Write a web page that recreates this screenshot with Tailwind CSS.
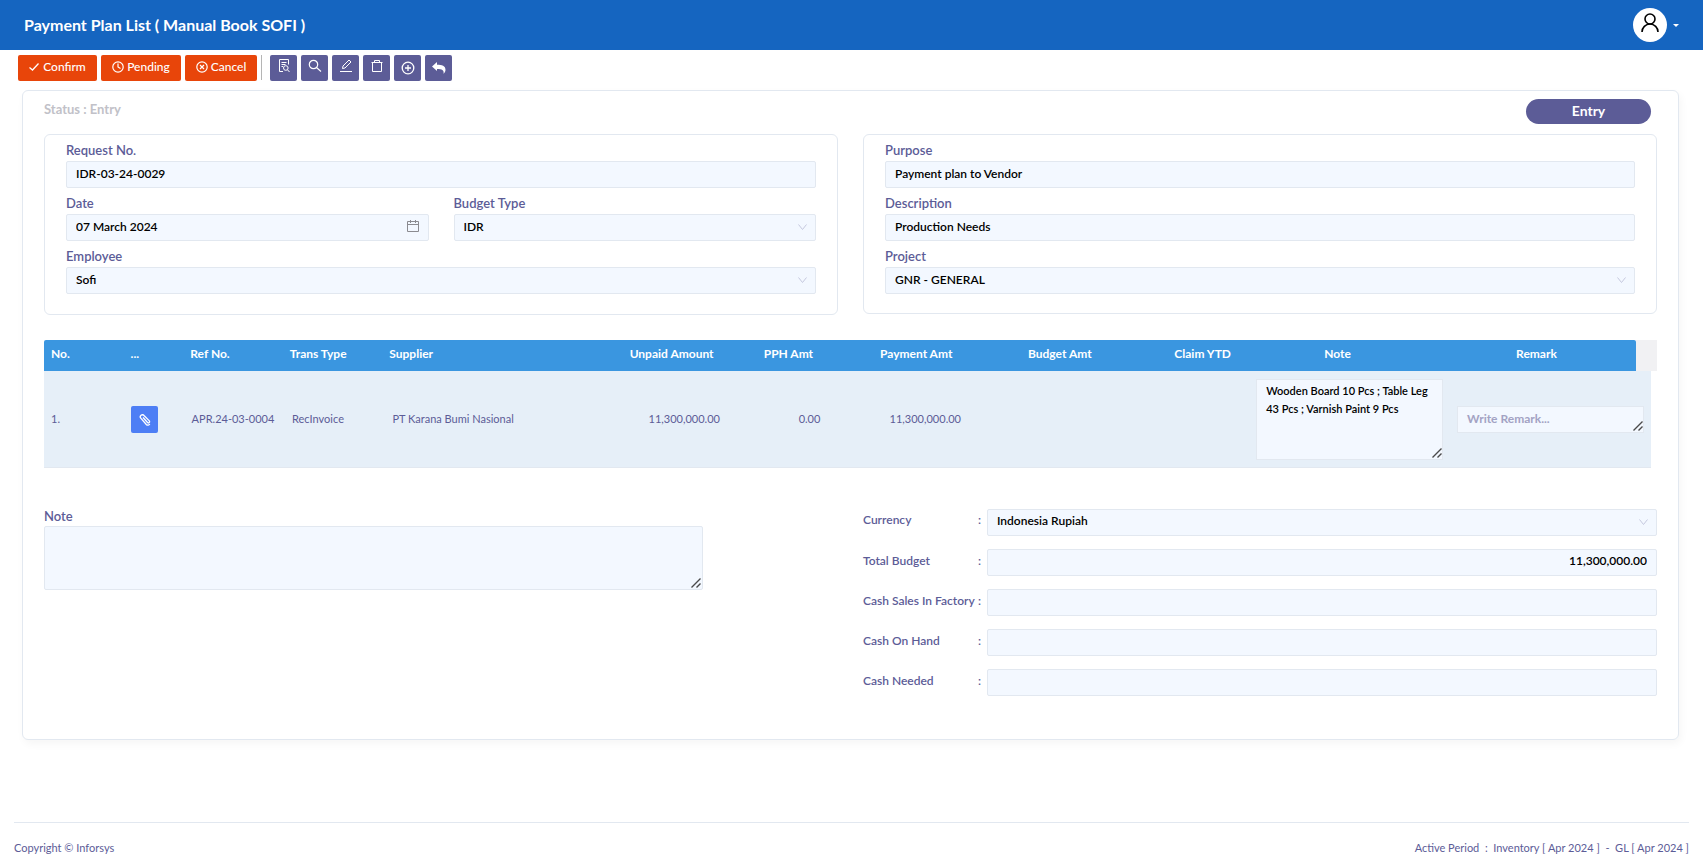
<!DOCTYPE html>
<html lang="en">
<head>
    <meta charset="UTF-8">
    <meta name="viewport" content="width=device-width, initial-scale=1.0">
    <script src="https://cdn.jsdelivr.net/npm/@tailwindcss/browser@4"></script>
    <title>Payment Plan List</title>
</head>
<body class="min-h-screen flex flex-col bg-white font-['Lato','Noto_Sans',sans-serif] text-xs text-[#5c5c97]">
    <header class="flex items-center justify-between h-[50px] px-6 bg-[#1565c0]">
        <h1 class="text-base font-bold text-white">Payment Plan List ( Manual Book SOFI )</h1>
        <button class="flex items-center gap-1.5" aria-label="Account">
            <span class="flex items-center justify-center size-[34px] rounded-full bg-white">
                <svg class="size-6 mb-1" viewBox="0 0 24 24" fill="none" stroke="#000" stroke-width="1.6"><circle cx="12" cy="8" r="5"/><path d="M4 21a8 8 0 0 1 16 0"/></svg>
            </span>
            <svg class="w-1.5 h-[3px]" viewBox="0 0 6 3" fill="#fff"><path d="M0 0h6L3 3z"/></svg>
        </button>
    </header>

    <!--toolbar-->
    <div class="flex gap-1 pt-[5px] pl-[18px] text-white">
        <button class="flex items-center justify-center gap-1 w-[79px] h-[26px] pb-0.5 rounded-xs bg-[#e8450a] font-medium">
            <svg class="size-2.5" viewBox="0 0 10 10" fill="none" stroke="currentColor" stroke-width="1.3"><path d="M.5 5.5l3 2.500L9.500 1.500"/></svg>Confirm</button>
        <button class="flex items-center justify-center gap-[3px] w-20 h-[26px] pb-0.5 rounded-xs bg-[#e8450a] font-medium">
            <svg class="size-3" viewBox="0 0 12 12" fill="none" stroke="currentColor" stroke-width="1.2"><circle cx="6" cy="6" r="5.200"/><path d="M6 2.500V6l2.500 1.500"/></svg>Pending</button>
        <button class="flex items-center justify-center gap-[3px] w-[72px] h-[26px] pb-0.5 rounded-xs bg-[#e8450a] font-medium">
            <svg class="size-3" viewBox="0 0 12 12" fill="none" stroke="currentColor" stroke-width="1.2"><circle cx="6" cy="6" r="5.200"/><path d="M4 4l4 4M8 4L4 8"/></svg>Cancel</button>
        <span class="w-px h-[25px] mr-1 bg-[#b5b5b5]"></span>
        <button class="flex items-center justify-center w-[27px] h-[26px] rounded-xs bg-[#5c5c97]" aria-label="Preview">
            <svg class="size-3.5 mb-1" viewBox="0 0 14 14" fill="none" stroke="currentColor"><path d="M6 12.500H2.500v-12h9v5M4.500 3.500h5M4.500 5.500h4M4.500 7.500h1.500"/><circle cx="8.800" cy="9" r="2.300"/><path d="M10.500 10.800l2 2.200"/></svg></button>
        <button class="flex items-center justify-center w-[27px] h-[26px] rounded-xs bg-[#5c5c97]" aria-label="Search">
            <svg class="size-3.5 mb-1" viewBox="0 0 14 14" fill="none" stroke="currentColor" stroke-width="1.2"><circle cx="5.500" cy="5.500" r="4.200"/><path d="M8.500 8.500l4.500 4"/></svg></button>
        <button class="flex items-center justify-center w-[27px] h-[26px] rounded-xs bg-[#5c5c97]" aria-label="Edit">
            <svg class="size-3.5 mb-1" viewBox="0 0 14 14" fill="none" stroke="currentColor"><path d="M3.500 9.500l.5-2.500 6-6L12 3 6 9zM1 12.500h12"/></svg></button>
        <button class="flex items-center justify-center w-[27px] h-[26px] rounded-xs bg-[#5c5c97]" aria-label="Delete">
            <svg class="size-3.5 mb-1" viewBox="0 0 14 14" fill="none" stroke="currentColor"><path d="M1.500 3.500h11M4.500 3.500v-2h5v2M2.500 3.500v9h9v-9"/></svg></button>
        <button class="flex items-center justify-center w-[27px] h-[26px] rounded-xs bg-[#5c5c97]" aria-label="Add">
            <svg class="size-3.5" viewBox="0 0 14 14" fill="none" stroke="currentColor" stroke-width="1.3"><circle cx="7" cy="7" r="5.800"/><path d="M7 4v6M4 7h6"/></svg></button>
        <button class="flex items-center justify-center w-[27px] h-[26px] rounded-xs bg-[#5c5c97]" aria-label="Back">
            <svg class="size-3.5" viewBox="0 0 14 14" fill="currentColor"><path d="M0 5.500L5 1v2.800c5 0 8.500 1.200 8.500 5 0 1.700-.8 3-2 4 .8-3.500-1.500-4.800-6.500-4.800V10z"/></svg></button>
    </div>

    <main class="mt-[9px] ml-[22px] mr-6 px-[21px] pb-[43px] border border-slate-200 rounded-md shadow-[2px_4px_8px_rgba(0,0,0,0.04)]">
        <div class="flex justify-between h-[43px] pt-2 pr-1.5">
            <p class="leading-5 text-[13px] font-bold text-[#c1c1c8]">Status : Entry</p>
            <span class="w-[125px] h-[25px] rounded-full bg-[#5c5c97] text-center text-sm leading-6 font-bold text-white">Entry</span>
        </div>

        <!--form-->
        <form class="grid grid-cols-2 items-start gap-[25px]">
            <div class="px-[21px] pb-5 border border-slate-200 rounded-md">
                <label class="block pt-[5px] pb-px leading-5 text-[13px] font-semibold" for="request">Request No.</label>
                <input class="block w-full h-[27px] px-[9px] pb-[3px] border border-slate-200 rounded-xs bg-[#f3f8ff] font-semibold text-black" id="request" type="text" value="IDR-03-24-0029">
                <div class="grid grid-cols-2 gap-[25px]">
                    <div>
                        <label class="block pt-[5px] pb-px leading-5 text-[13px] font-semibold" for="date">Date</label>
                        <div class="relative">
                            <input class="block w-full h-[27px] px-[9px] pb-[3px] border border-slate-200 rounded-xs bg-[#f3f8ff] font-semibold text-black" id="date" type="text" value="07 March 2024">
                            <svg class="absolute right-2.5 top-1.5 size-3" viewBox="0 0 12 12" fill="none" stroke="#8b8b90"><path d="M.5 1.500h11v10H.5zM.5 4.500h11M3.500 0v3M8.500 0v3"/></svg>
                        </div>
                    </div>
                    <div>
                        <label class="block pt-[5px] pb-px leading-5 text-[13px] font-semibold" for="budget">Budget Type</label>
                        <div class="relative">
                            <select class="block w-full h-[27px] px-[9px] pb-0.5 appearance-none border border-slate-200 rounded-xs bg-[#f3f8ff] font-semibold text-black" id="budget"><option>IDR</option></select>
                            <svg class="absolute right-[9px] top-2.5 w-[9px] h-[7px]" viewBox="0 0 9 7" fill="none" stroke="#c5c9de"><path d="M.5.500l4 5 4-5"/></svg>
                        </div>
                    </div>
                </div>
                <label class="block pt-[5px] pb-px leading-5 text-[13px] font-semibold" for="employee">Employee</label>
                <div class="relative">
                    <select class="block w-full h-[27px] px-[9px] pb-0.5 appearance-none border border-slate-200 rounded-xs bg-[#f3f8ff] font-semibold text-black" id="employee"><option>Sofi</option></select>
                    <svg class="absolute right-[9px] top-2.5 w-[9px] h-[7px]" viewBox="0 0 9 7" fill="none" stroke="#c5c9de"><path d="M.5.500l4 5 4-5"/></svg>
                </div>
            </div>
            <div class="px-[21px] pb-[19px] border border-slate-200 rounded-md">
                <label class="block pt-[5px] pb-px leading-5 text-[13px] font-semibold" for="purpose">Purpose</label>
                <input class="block w-full h-[27px] px-[9px] pb-[3px] border border-slate-200 rounded-xs bg-[#f3f8ff] font-semibold text-black" id="purpose" type="text" value="Payment plan to Vendor">
                <label class="block pt-[5px] pb-px leading-5 text-[13px] font-semibold" for="description">Description</label>
                <input class="block w-full h-[27px] px-[9px] pb-[3px] border border-slate-200 rounded-xs bg-[#f3f8ff] font-semibold text-black" id="description" type="text" value="Production Needs">
                <label class="block pt-[5px] pb-px leading-5 text-[13px] font-semibold" for="project">Project</label>
                <div class="relative">
                    <select class="block w-full h-[27px] px-[9px] pb-0.5 appearance-none border border-slate-200 rounded-xs bg-[#f3f8ff] font-semibold text-black" id="project"><option>GNR - GENERAL</option></select>
                    <svg class="absolute right-[9px] top-2.5 w-[9px] h-[7px]" viewBox="0 0 9 7" fill="none" stroke="#c5c9de"><path d="M.5.500l4 5 4-5"/></svg>
                </div>
            </div>
        </form>

        <!--table head, the grey strip is the scrollbar gutter-->
        <div class="mt-[25px] pr-[21px] bg-[linear-gradient(#f1f1f3,#f1f1f3)] bg-right bg-no-repeat bg-[length:21px_100%]">
            <table class="w-full table-fixed">
                <colgroup><col class="w-10"><col class="w-[30px]"><col class="w-[50px]"><col class="w-[50px]"><col class="w-[100px]"><col class="w-[70px]"><col class="w-[50px]"><col class="w-[70px]"><col class="w-[70px]"><col class="w-[70px]"><col class="w-[100px]"><col class="w-[100px]"></colgroup>
                <thead>
                    <tr class="h-[31px] text-left text-white [&>th]:px-[7px] [&>th]:pb-1 [&>th]:bg-[#3a96e0] [&>th]:whitespace-nowrap">
                        <th class="rounded-tl-xs">No.</th>
                        <th>...</th>
                        <th>Ref No.</th>
                        <th>Trans Type</th>
                        <th>Supplier</th>
                        <th class="text-right">Unpaid Amount</th>
                        <th class="text-right">PPH Amt</th>
                        <th class="text-right">Payment Amt</th>
                        <th class="text-right">Budget Amt</th>
                        <th class="text-right">Claim YTD</th>
                        <th class="text-center">Note</th>
                        <th class="rounded-tr-xs text-center">Remark</th>
                    </tr>
                </thead>
            </table>
        </div>
        <div class="pr-1.5">
            <table class="w-full table-fixed">
                <colgroup><col class="w-10"><col class="w-[30px]"><col class="w-[50px]"><col class="w-[50px]"><col class="w-[100px]"><col class="w-[70px]"><col class="w-[50px]"><col class="w-[70px]"><col class="w-[70px]"><col class="w-[70px]"><col class="w-[100px]"><col class="w-[100px]"></colgroup>
                <tbody>
                    <tr class="h-24 bg-[#e6eff8] border-b border-slate-200 text-[11px] [&>td]:px-[7px] [&>td]:pt-0.5 [&>td]:whitespace-nowrap">
                        <td>1.</td>
                        <td>
                            <button class="flex items-center justify-center size-[27px] rounded-xs bg-[#4d7ef5]" aria-label="Attachment">
                                <svg class="size-3" viewBox="0 0 12 12" fill="none" stroke="#fff" stroke-width="1.3"><path d="M4 3.500l4.500 5a1.200 1.200 0 0 0 1.800-1.600L5 1.500a2 2 0 0 0-3.200 2.700l5.500 6.300a2.200 2.200 0 0 0 3.500-.5"/></svg>
                            </button>
                        </td>
                        <td>APR.24-03-0004</td>
                        <td>RecInvoice</td>
                        <td>PT Karana Bumi Nasional</td>
                        <td class="text-right">11,300,000.00</td>
                        <td class="text-right">0.00</td>
                        <td class="text-right">11,300,000.00</td>
                        <td></td>
                        <td></td>
                        <td>
                            <div class="relative">
                                <textarea class="block w-full h-[81px] px-[9px] py-0.5 border border-slate-200 bg-[#f3f8ff] resize-none leading-[18px] font-semibold text-black" aria-label="Note">Wooden Board 10 Pcs ; Table Leg 43 Pcs ; Varnish Paint 9 Pcs</textarea>
                                <svg class="absolute right-px bottom-0.5 size-2.5" viewBox="0 0 10 10" fill="none" stroke="#4a4a4a" stroke-width="1.4"><path d="M.5 9.500l9-9M5.500 9.500l4-4"/></svg>
                            </div>
                        </td>
                        <td>
                            <div class="relative">
                                <textarea class="block w-full h-[27px] px-[9px] py-[3px] border border-slate-200 bg-[#f3f8ff] resize-none overflow-hidden text-xs leading-[18px] font-semibold text-black placeholder:font-bold placeholder:text-[#a3a3c4]" aria-label="Remark" placeholder="Write Remark..."></textarea>
                                <svg class="absolute right-px bottom-0.5 size-2.5" viewBox="0 0 10 10" fill="none" stroke="#4a4a4a" stroke-width="1.4"><path d="M.5 9.500l9-9M5.500 9.500l4-4"/></svg>
                            </div>
                        </td>
                    </tr>
                </tbody>
            </table>
        </div>

        <!--note and totals-->
        <div class="grid grid-cols-2 gap-[25px] mt-[38px]">
            <div>
                <label class="block leading-5 text-[13px] font-semibold" for="note">Note</label>
                <div class="relative w-[83%]">
                    <textarea class="block w-full h-16 px-[9px] border border-slate-200 rounded-xs bg-[#f3f8ff] resize-none font-semibold text-black" id="note"></textarea>
                    <svg class="absolute right-0.5 bottom-0.5 size-2.5" viewBox="0 0 10 10" fill="none" stroke="#4a4a4a" stroke-width="1.4"><path d="M.5 9.500l9-9M5.500 9.500l4-4"/></svg>
                </div>
            </div>
            <div class="flex flex-col gap-[13px] pt-[3px] font-semibold">
                <div class="flex">
                    <label class="w-[115px] leading-[22px]" for="currency">Currency</label><span class="w-[9px] leading-[22px]">:</span>
                    <div class="relative flex-1">
                        <select class="block w-full h-[27px] px-[9px] pb-0.5 appearance-none border border-slate-200 rounded-xs bg-[#f3f8ff] text-black" id="currency"><option>Indonesia Rupiah</option></select>
                        <svg class="absolute right-[9px] top-2.5 w-[9px] h-[7px]" viewBox="0 0 9 7" fill="none" stroke="#c5c9de"><path d="M.5.500l4 5 4-5"/></svg>
                    </div>
                </div>
                <div class="flex">
                    <label class="w-[115px] leading-6" for="total">Total Budget</label><span class="w-[9px] leading-6">:</span>
                    <input class="flex-1 h-[27px] px-[9px] pb-[3px] border border-slate-200 rounded-xs bg-[#f3f8ff] text-right text-black" id="total" type="text" value="11,300,000.00">
                </div>
                <div class="flex">
                    <label class="w-[115px] leading-6" for="sales">Cash Sales In Factory</label><span class="w-[9px] leading-6">:</span>
                    <input class="flex-1 h-[27px] px-[9px] border border-slate-200 rounded-xs bg-[#f3f8ff] text-right text-black" id="sales" type="text">
                </div>
                <div class="flex">
                    <label class="w-[115px] leading-6" for="hand">Cash On Hand</label><span class="w-[9px] leading-6">:</span>
                    <input class="flex-1 h-[27px] px-[9px] border border-slate-200 rounded-xs bg-[#f3f8ff] text-right text-black" id="hand" type="text">
                </div>
                <div class="flex">
                    <label class="w-[115px] leading-6" for="needed">Cash Needed</label><span class="w-[9px] leading-6">:</span>
                    <input class="flex-1 h-[27px] px-[9px] border border-slate-200 rounded-xs bg-[#f3f8ff] text-right text-black" id="needed" type="text">
                </div>
            </div>
        </div>
    </main>

    <footer class="flex justify-between mt-auto mx-3.5 pt-[15px] pb-1.5 border-t border-slate-200 leading-5 text-[11px]">
        <p>Copyright © Inforsys</p>
        <p class="whitespace-pre">Active Period  :  Inventory [ Apr 2024 ]  -  GL [ Apr 2024 ]</p>
    </footer>
</body>
</html>
